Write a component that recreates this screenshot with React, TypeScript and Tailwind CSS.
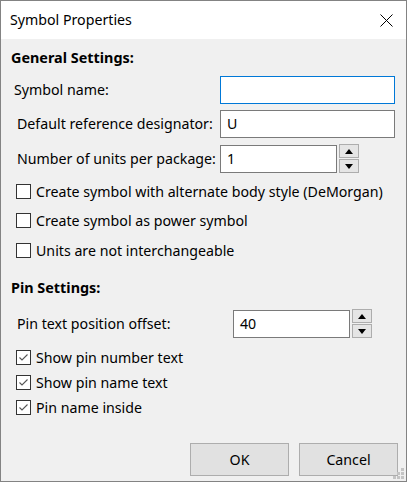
import React from 'react';

const FONT = "font-['Noto_Sans',sans-serif]";

function TextBox({ value, width, focused = false }: { value: string; width: string; focused?: boolean }) {
  return (
    <div
      className={`${width} h-[28px] bg-white border flex items-center pl-[6px] text-[14.2px] text-black ${
        focused ? 'border-[#0078d7]' : 'border-[#7a7a7a]'
      }`}
    >
      {value}
    </div>
  );
}

function Spinner() {
  return (
    <div className="flex flex-col w-[20px] h-[29px] gap-px">
      <div className="flex-1 bg-[#e5e5e5] border border-[#adadad] flex items-center justify-center">
        <svg width="8" height="5" viewBox="0 0 8 5">
          <polygon points="0,5 8,5 4,0" fill="#000" />
        </svg>
      </div>
      <div className="flex-1 bg-[#e5e5e5] border border-[#adadad] flex items-center justify-center">
        <svg width="8" height="5" viewBox="0 0 8 5">
          <polygon points="0,0 8,0 4,5" fill="#000" />
        </svg>
      </div>
    </div>
  );
}

function CheckBox({ label, checked = false, className = '' }: { label: string; checked?: boolean; className?: string }) {
  return (
    <div className={`flex items-center h-[15px] pl-[15px] ${className}`}>
      <div className="w-[15px] h-[15px] shrink-0 bg-white border border-[#333] flex items-center justify-center">
        {checked && (
          <svg width="13" height="13" viewBox="0 0 13 13">
            <polyline points="2.5,6.5 5,9 10.5,3.5" fill="none" stroke="#555" strokeWidth="1.1" />
          </svg>
        )}
      </div>
      <span className="ml-[5px] text-[14.2px] text-black whitespace-nowrap">{label}</span>
    </div>
  );
}

function FieldRow({ label, labelPad, children, className = '' }: { label: string; labelPad: string; children: React.ReactNode; className?: string }) {
  return (
    <div className={`flex items-center ${className}`}>
      <div className={`w-[219px] shrink-0 text-[14.2px] text-black whitespace-nowrap ${labelPad}`}>{label}</div>
      {children}
    </div>
  );
}

export default function App() {
  return (
    <div className={`relative w-[407px] h-[482px] border border-[#838383] bg-[#f0f0f0] flex flex-col ${FONT}`}>
      {/* Title bar */}
      <div className="h-[38px] bg-white flex items-center justify-between pl-[9px] pr-[13px]">
        <span className="text-[14.2px] text-black">Symbol Properties</span>
        <svg width="13" height="13" viewBox="0 0 13 13">
          <path d="M0.5 0.5 L12.5 12.5 M12.5 0.5 L0.5 12.5" stroke="#000" strokeWidth="1" />
        </svg>
      </div>

      {/* Body */}
      <div className="flex-1 flex flex-col pt-[9px]">
        <div className="h-[20px] pl-[10px] text-[14.4px] font-bold text-black leading-[20px]">General Settings:</div>

        <FieldRow label="Symbol name:" labelPad="pl-[13px]" className="mt-[8px]">
          <TextBox value="" width="w-[175px]" focused />
        </FieldRow>
        <FieldRow label="Default reference designator:" labelPad="pl-[16px]" className="mt-[6px]">
          <TextBox value="U" width="w-[175px]" />
        </FieldRow>
        <FieldRow label="Number of units per package:" labelPad="pl-[16px]" className="mt-[6px]">
          <div className="flex items-center gap-[2px]">
            <TextBox value="1" width="w-[117px]" />
            <Spinner />
          </div>
        </FieldRow>

        <CheckBox label="Create symbol with alternate body style (DeMorgan)" className="mt-[11px]" />
        <CheckBox label="Create symbol as power symbol" className="mt-[14px]" />
        <CheckBox label="Units are not interchangeable" className="mt-[15px]" />

        <div className="mt-[20px] h-[20px] pl-[10px] text-[14.4px] font-bold text-black leading-[20px]">Pin Settings:</div>

        <div className="flex items-center mt-[11px]">
          <div className="w-[232px] shrink-0 pl-[16px] text-[14.2px] text-black whitespace-nowrap">Pin text position offset:</div>
          <div className="flex items-center gap-[2px]">
            <TextBox value="40" width="w-[117px]" />
            <Spinner />
          </div>
        </div>

        <CheckBox label="Show pin number text" checked className="mt-[12px]" />
        <CheckBox label="Show pin name text" checked className="mt-[10px]" />
        <CheckBox label="Pin name inside" checked className="mt-[10px]" />

        <div className="mt-[28px] flex justify-end gap-[10px] pr-[8px]">
          <button className="w-[99px] h-[33px] bg-[#e1e1e1] border border-[#adadad] text-[14.2px] text-black">OK</button>
          <button className="w-[99px] h-[33px] bg-[#e1e1e1] border border-[#adadad] text-[14.2px] text-black">Cancel</button>
        </div>
      </div>

      {/* Resize grip */}
      <svg className="absolute right-[1px] bottom-[1px]" width="12" height="12" viewBox="0 0 12 12">
        <rect x="8" y="0" width="3" height="3" fill="#c4c4c4" />
        <rect x="4" y="4" width="3" height="3" fill="#c4c4c4" />
        <rect x="8" y="4" width="3" height="3" fill="#c4c4c4" />
        <rect x="0" y="8" width="3" height="3" fill="#c4c4c4" />
        <rect x="4" y="8" width="3" height="3" fill="#c4c4c4" />
        <rect x="8" y="8" width="3" height="3" fill="#c4c4c4" />
      </svg>
    </div>
  );
}
